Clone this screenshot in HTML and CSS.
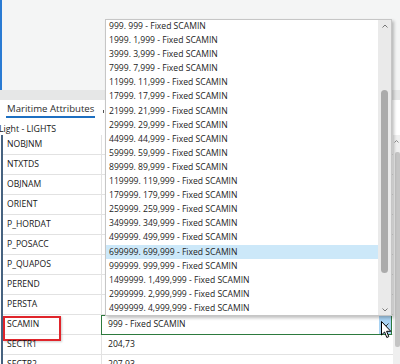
FILE: index.html
```html
<!DOCTYPE html>
<html lang="en">
<head>
    <meta charset="UTF-8">
    <meta name="viewport" content="width=device-width, initial-scale=1.0">
    <title>Maritime Attributes</title>
    <link rel="stylesheet" href="styles.css">
</head>
<body>
    <div class="top-pane"></div>
    <div class="splitter"></div>

    <div class="attr-pane">
        <div class="tabs">
            <span class="tab active">Maritime Attributes</span>
            <span class="tab-edge"></span>
        </div>
        <div class="group-title">Light - LIGHTS</div>

        <div class="grid">
            <div class="rows">
                <div class="row"><div class="label">NOBJNM</div><div class="value"></div></div>
                <div class="row"><div class="label">NTXTDS</div><div class="value"></div></div>
                <div class="row"><div class="label">OBJNAM</div><div class="value"></div></div>
                <div class="row"><div class="label">ORIENT</div><div class="value"></div></div>
                <div class="row"><div class="label">P_HORDAT</div><div class="value"></div></div>
                <div class="row"><div class="label">P_POSACC</div><div class="value"></div></div>
                <div class="row"><div class="label">P_QUAPOS</div><div class="value"></div></div>
                <div class="row"><div class="label">PEREND</div><div class="value"></div></div>
                <div class="row"><div class="label">PERSTA</div><div class="value"></div></div>
                <div class="row">
                    <div class="label marked">SCAMIN</div>
                    <div class="value editing">
                        999 - Fixed SCAMIN
                        <span class="drop-btn">
                            <svg width="7" height="4" viewBox="0 0 7 4"><polyline points="0.5,0.5 3.5,3.5 6.5,0.5" fill="none" stroke="#333" stroke-width="1"/></svg>
                        </span>
                    </div>
                </div>
                <div class="row"><div class="label">SECTR1</div><div class="value">204,73</div></div>
                <div class="row"><div class="label">SECTR2</div><div class="value">207,93</div></div>
            </div>
            <div class="vscroll">
                <div class="chev">
                    <svg width="5" height="3" viewBox="0 0 5 3"><polyline points="0.5,2.5 2.5,0.5 4.5,2.5" fill="none" stroke="#8a8a8a" stroke-width="1"/></svg>
                </div>
                <div class="thumb"></div>
            </div>
        </div>
    </div>

    <!-- lista desplegada del SCAMIN -->
    <div class="popup">
        <div class="list">
            <div class="item">999. 999 - Fixed SCAMIN</div>
            <div class="item">1999. 1,999 - Fixed SCAMIN</div>
            <div class="item">3999. 3,999 - Fixed SCAMIN</div>
            <div class="item">7999. 7,999 - Fixed SCAMIN</div>
            <div class="item">11999. 11,999 - Fixed SCAMIN</div>
            <div class="item">17999. 17,999 - Fixed SCAMIN</div>
            <div class="item">21999. 21,999 - Fixed SCAMIN</div>
            <div class="item">29999. 29,999 - Fixed SCAMIN</div>
            <div class="item">44999. 44,999 - Fixed SCAMIN</div>
            <div class="item">59999. 59,999 - Fixed SCAMIN</div>
            <div class="item">89999. 89,999 - Fixed SCAMIN</div>
            <div class="item">119999. 119,999 - Fixed SCAMIN</div>
            <div class="item">179999. 179,999 - Fixed SCAMIN</div>
            <div class="item">259999. 259,999 - Fixed SCAMIN</div>
            <div class="item">349999. 349,999 - Fixed SCAMIN</div>
            <div class="item">499999. 499,999 - Fixed SCAMIN</div>
            <div class="item selected">699999. 699,999 - Fixed SCAMIN</div>
            <div class="item">999999. 999,999 - Fixed SCAMIN</div>
            <div class="item">1499999. 1,499,999 - Fixed SCAMIN</div>
            <div class="item">2999999. 2,999,999 - Fixed SCAMIN</div>
            <div class="item">4999999. 4,999,999 - Fixed SCAMIN</div>
        </div>
        <div class="pscroll">
            <div class="pchev">
                <svg width="6" height="4" viewBox="0 0 6 4"><polyline points="0.5,3.5 3,1 5.5,3.5" fill="none" stroke="#777" stroke-width="1"/></svg>
            </div>
            <div class="pthumb"></div>
            <div class="pchev bottom">
                <svg width="6" height="4" viewBox="0 0 6 4"><polyline points="0.5,0.5 3,3 5.5,0.5" fill="none" stroke="#777" stroke-width="1"/></svg>
            </div>
        </div>
    </div>

    <svg class="cursor" width="11" height="18" viewBox="0 0 11 18">
        <path d="M0.5,0.5 L0.5,14 L3.6,11 L5.8,16.5 L7.8,15.6 L5.6,10.3 L9.8,10.3 Z" fill="#fff" stroke="#000" stroke-width="1" stroke-linejoin="round"/>
    </svg>
</body>
</html>
```

FILE: styles.css
```css
/* Estilos generales */
* {
    box-sizing: border-box;
}

body {
    margin: 0;
    width: 400px;
    height: 364px;
    overflow: hidden;
    position: relative;
    background: #fff;
    font-family: "Open Sans", "Noto Sans", sans-serif;
    font-size: 8.6px;
    color: #161616;
}

/* Panel superior */
.top-pane {
    height: 90px;
    background: #f4f5f5;
    border-left: 2px solid #2a7bd3;
}

.splitter {
    height: 10px;
    background: #e6e7e7;
}

/* Pestañas */
.tabs {
    display: flex;
    align-items: flex-end;
    height: 18px;
    padding-left: 6px;
}

.tab {
    font-size: 9.6px;
    line-height: 14px;
    padding: 0 1px;
    color: #2b2b2b;
    border-bottom: 2px solid transparent;
}

.tab.active {
    border-bottom-color: #1d6fc1;
}

/* borde de la siguiente pestaña, tapada por la lista */
.tab-edge {
    align-self: center;
    margin: 4px 0 0 8px;
    width: 1px;
    height: 3px;
    background: #555;
}

.group-title {
    margin: 6px 0 0 -1px;
    font-size: 8.8px;
    line-height: 11px;
}

/* Tabla de atributos */
.grid {
    display: flex;
    height: 229px;
}

.rows {
    flex: 1;
    margin-left: 1px;
    border-left: 2px solid #46627f;
}

.row {
    display: flex;
    height: 20px;
    border-bottom: 1px solid #e2e2e2;
}

.label {
    width: 99px;
    padding-left: 4px;
    line-height: 19px;
    border-right: 1px solid #e2e2e2;
    position: relative;
}

.value {
    flex: 1;
    padding-left: 6px;
    line-height: 19px;
    position: relative;
}

.label.marked::after {
    content: "";
    position: absolute;
    left: 0;
    top: 1px;
    width: 54px;
    height: 21px;
    border: 2px solid #e0252b;
    box-shadow: 1px 1px 2px rgba(0, 0, 0, 0.2);
}

.value.editing::after {
    content: "";
    position: absolute;
    left: -1px;
    top: 0;
    right: 1px;
    bottom: -1px;
    border: 1px solid #2d7a3e;
}

.drop-btn {
    position: absolute;
    right: 2px;
    top: 1px;
    width: 12px;
    height: 18px;
    background: #a9d3f3;
    display: flex;
    align-items: center;
    justify-content: center;
}

.vscroll {
    width: 7px;
    background: #efefef;
}

.chev {
    height: 12px;
    display: flex;
    align-items: center;
    justify-content: center;
}

.thumb {
    margin: 5px 0 0 2px;
    width: 5px;
    height: 195px;
    background: #c4c4c4;
    border-radius: 2px;
}

/* Lista desplegable */
.popup {
    position: absolute;
    left: 105px;
    top: 19px;
    width: 287px;
    height: 297px;
    display: flex;
    background: #fff;
    border: 1px solid #c6c6c6;
    box-shadow: 2px 2px 3px rgba(0, 0, 0, 0.25);
}

.list {
    flex: 1;
    overflow: hidden;
}

.item {
    height: 14.1px;
    line-height: 14.1px;
    padding-left: 3px;
    white-space: nowrap;
    color: #1c1c1c;
}

.item:first-child {
    margin-top: -1px;
}

.item.selected {
    background: #cce8f9;
}

.pscroll {
    width: 13px;
    background: #eaeaea;
    display: flex;
    flex-direction: column;
}

.pchev {
    height: 12px;
    display: flex;
    align-items: center;
    justify-content: center;
}

.pchev.bottom {
    margin-top: auto;
    height: 10px;
}

.pthumb {
    margin: 58px 0 0 3px;
    width: 7px;
    height: 183px;
    background: #ababab;
    border-radius: 3.5px;
}

.cursor {
    position: absolute;
    left: 381px;
    top: 321px;
}
```
